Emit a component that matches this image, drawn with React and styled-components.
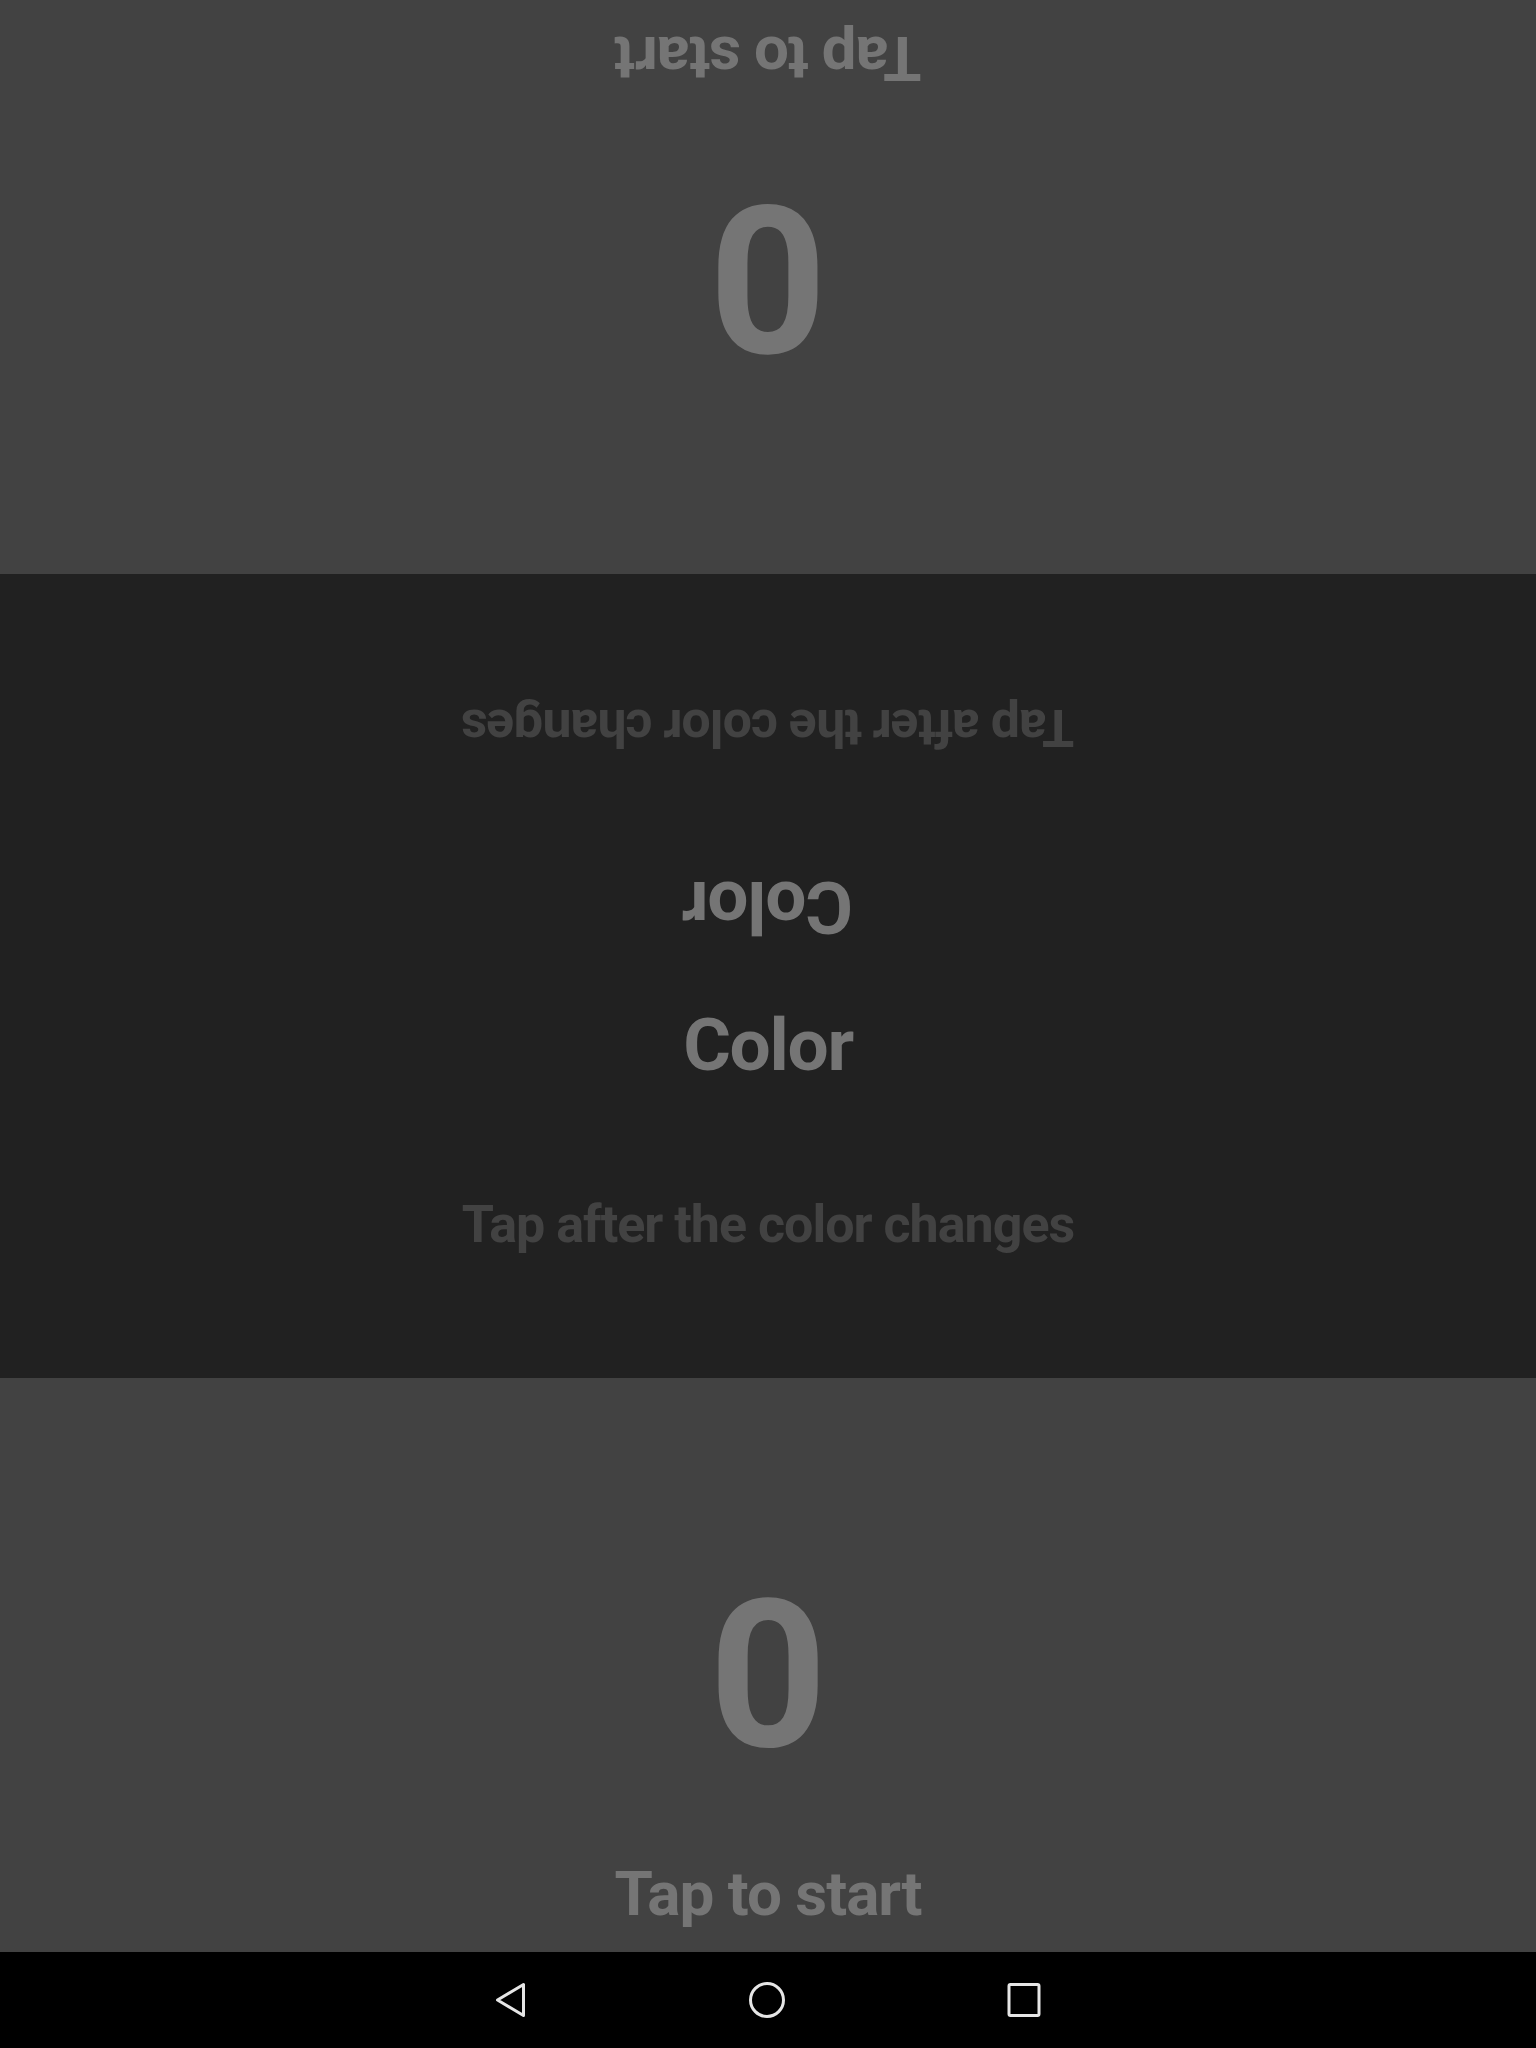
import React from "react";
import styled, { createGlobalStyle } from "styled-components";

const GlobalStyle = createGlobalStyle`
  html, body {
    margin: 0;
    padding: 0;
    background: #000;
  }
  body {
    font-family: Roboto, "Noto Sans", "Liberation Sans", sans-serif;
  }
`;

const Screen = styled.div`
  display: flex;
  flex-direction: column;
  width: 1536px;
  height: 2048px;
  overflow: hidden;
`;

const PlayerPanel = styled.div`
  flex: 1;
  display: flex;
  flex-direction: column;
  align-items: center;
  padding-top: 195px;
  gap: 84px;
  background: #424242;
  color: #757575;
  font-weight: 700;
  transform: ${(p) => (p.$flipped ? "rotate(180deg)" : "none")};
`;

const Score = styled.div`
  font-size: 206px;
  line-height: 1;
`;

const Hint = styled.div`
  font-size: 62px;
  line-height: 1;
  letter-spacing: -1px;
`;

const Middle = styled.div`
  height: 804px;
  display: flex;
  flex-direction: column;
  background: #212121;
`;

const Half = styled.div`
  height: 402px;
  display: flex;
  flex-direction: column;
  align-items: center;
  padding-top: 33px;
  box-sizing: border-box;
  font-weight: 700;
  transform: ${(p) => (p.$flipped ? "rotate(180deg)" : "none")};
`;

const ColorWord = styled.div`
  font-size: 73px;
  line-height: 1;
  letter-spacing: -1.3px;
  color: #757575;
`;

const Instruction = styled.div`
  margin-top: 117px;
  font-size: 52px;
  line-height: 1;
  letter-spacing: -1px;
  color: #424242;
`;

const NavBar = styled.div`
  height: 96px;
  flex-shrink: 0;
  background: #000;
  display: flex;
  align-items: center;
  justify-content: center;
  gap: 222px;
`;

const NavIcon = styled.svg`
  display: block;
  width: ${(p) => p.$w}px;
  height: 36px;
`;

function Player({ flipped }) {
  return (
    <PlayerPanel $flipped={flipped}>
      <Score>0</Score>
      <Hint>Tap to start</Hint>
    </PlayerPanel>
  );
}

function ColorHalf({ flipped }) {
  return (
    <Half $flipped={flipped}>
      <ColorWord>Color</ColorWord>
      <Instruction>Tap after the color changes</Instruction>
    </Half>
  );
}

export default function App() {
  return (
    <>
      <GlobalStyle />
      <Screen>
        <Player flipped />
        <Middle>
          <ColorHalf flipped />
          <ColorHalf />
        </Middle>
        <Player />
        <NavBar>
          <NavIcon $w={32} viewBox="0 0 32 36">
            <path
              d="M28.5 2.5 L28.5 33.5 L2.5 18 Z"
              fill="none"
              stroke="#e6e6e6"
              strokeWidth="3"
              strokeLinejoin="round"
            />
          </NavIcon>
          <NavIcon $w={36} viewBox="0 0 36 36">
            <circle cx="18" cy="18" r="16.5" fill="none" stroke="#e6e6e6" strokeWidth="3" />
          </NavIcon>
          <NavIcon $w={34} viewBox="0 0 34 36">
            <rect x="2" y="2.5" width="30" height="31" rx="1.5" fill="none" stroke="#e6e6e6" strokeWidth="3" />
          </NavIcon>
        </NavBar>
      </Screen>
    </>
  );
}
